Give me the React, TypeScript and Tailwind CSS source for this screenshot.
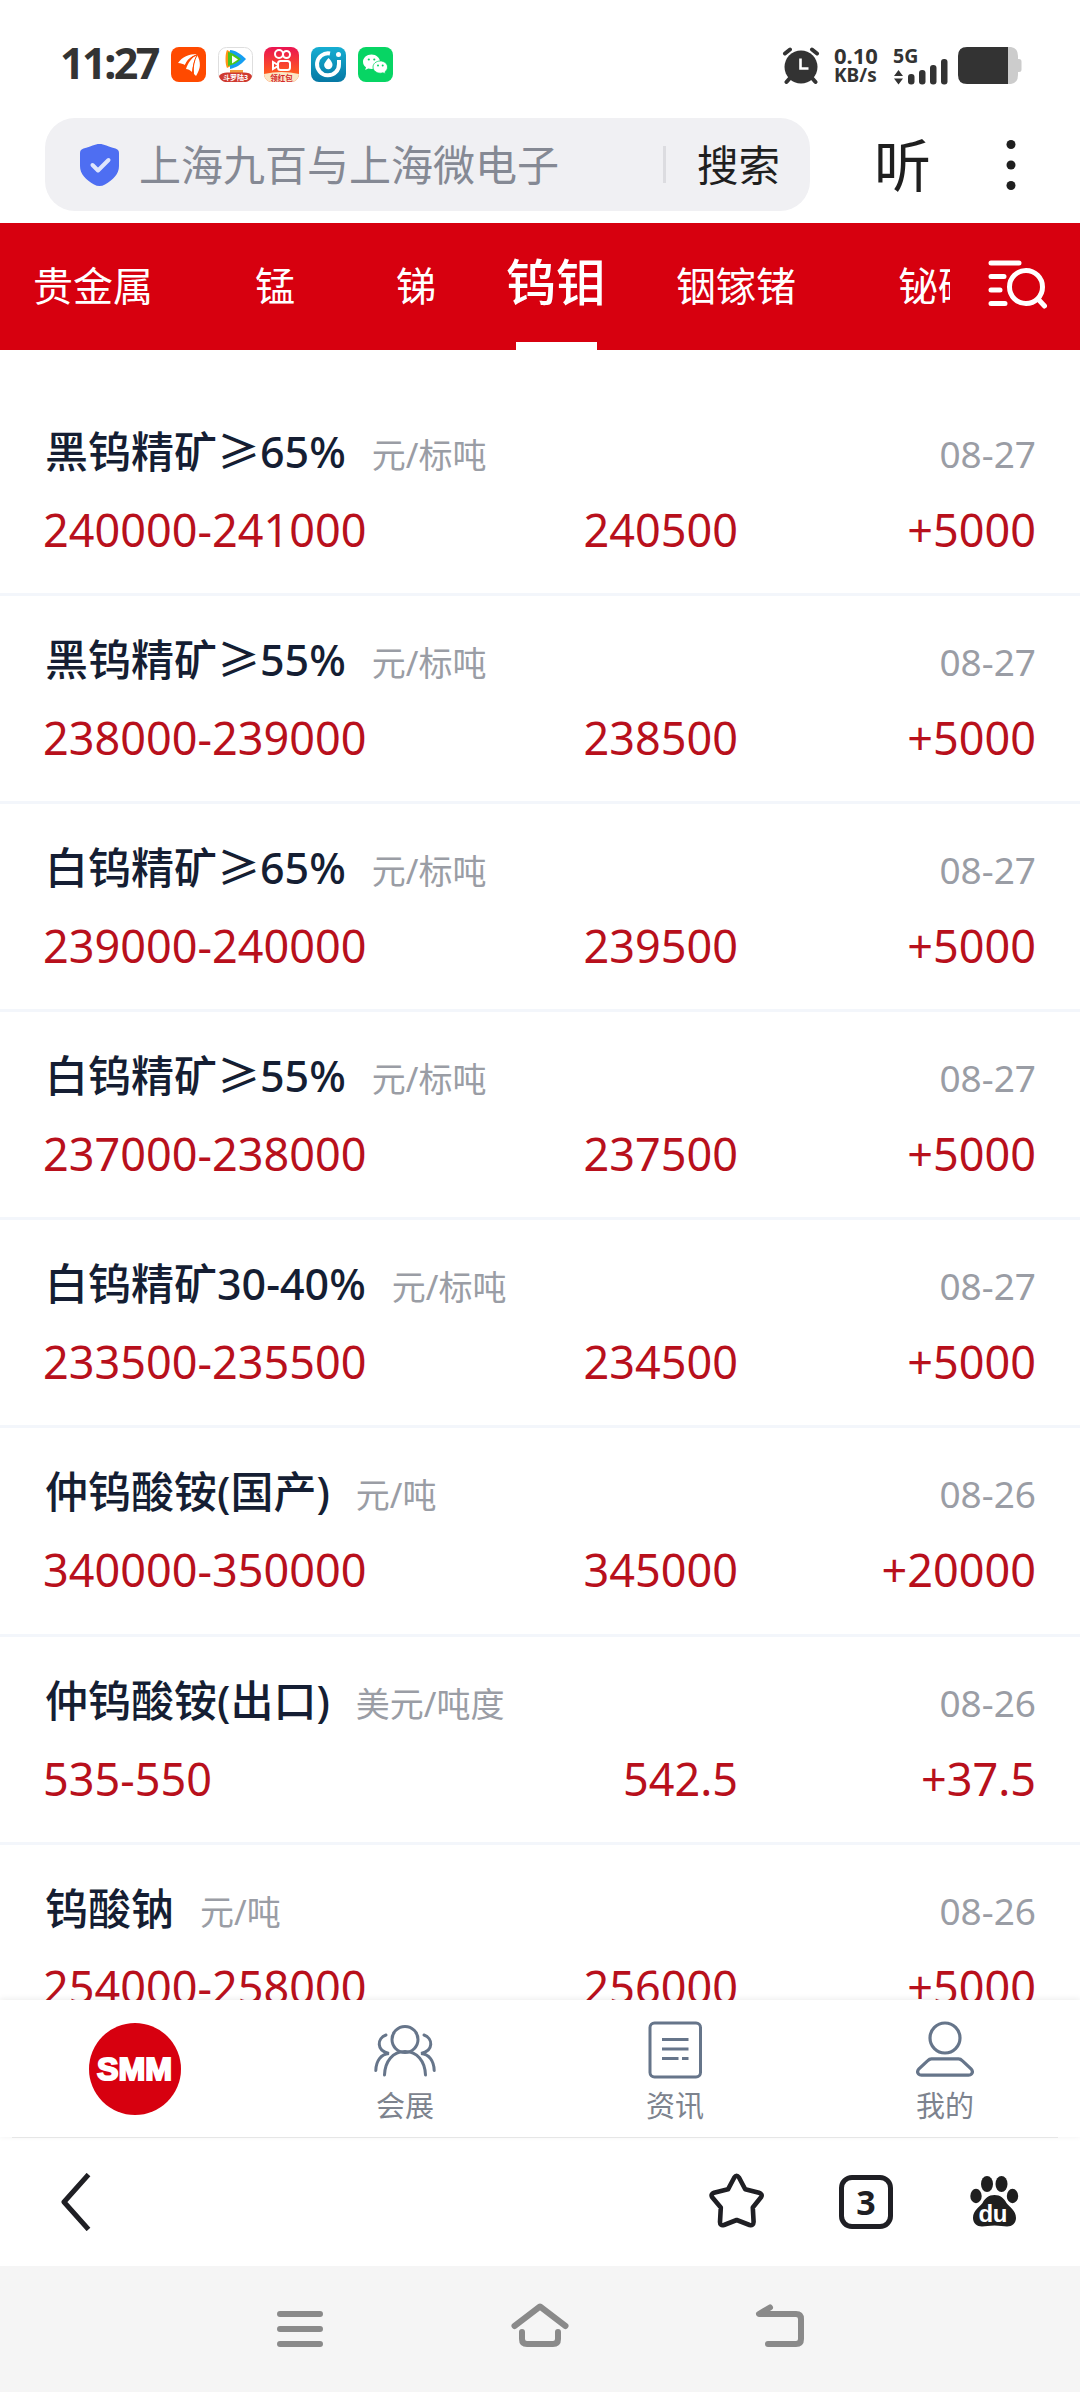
import React from 'react';

interface Quote {
  name: string;
  unit: string;
  date: string;
  range: string;
  average: string;
  change: string;
}

const quotes: Quote[] = [
  { name: '黑钨精矿≥65%', unit: '元/标吨', date: '08-27', range: '240000-241000', average: '240500', change: '+5000' },
  { name: '黑钨精矿≥55%', unit: '元/标吨', date: '08-27', range: '238000-239000', average: '238500', change: '+5000' },
  { name: '白钨精矿≥65%', unit: '元/标吨', date: '08-27', range: '239000-240000', average: '239500', change: '+5000' },
  { name: '白钨精矿≥55%', unit: '元/标吨', date: '08-27', range: '237000-238000', average: '237500', change: '+5000' },
  { name: '白钨精矿30-40%', unit: '元/标吨', date: '08-27', range: '233500-235500', average: '234500', change: '+5000' },
  { name: '仲钨酸铵(国产)', unit: '元/吨', date: '08-26', range: '340000-350000', average: '345000', change: '+20000' },
  { name: '仲钨酸铵(出口)', unit: '美元/吨度', date: '08-26', range: '535-550', average: '542.5', change: '+37.5' },
  { name: '钨酸钠', unit: '元/吨', date: '08-26', range: '254000-258000', average: '256000', change: '+5000' },
];

const AppIcons = () => (
  <div className="ml-[16px] flex gap-[11.7px]">
    <svg width="35" height="35" viewBox="0 0 35 35">
      <rect width="35" height="35" rx="8" fill="#ff4a00" />
      <path d="M7 16c4-6 11-9 19-9-7 3-10 6-12 11-2-1-4-2-7-2z" fill="#fff" />
      <path d="M15 22c2-6 5-11 11-14-3 6-4 10-5 17-2-2-4-3-6-3z" fill="#fff" />
      <path d="M23 27c-1-7 0-13 3-19 4 7 4 13-1 21z" fill="#fff" />
      <path d="M14 19c3-6 6-9 12-11M22 26c0-7 1-12 4-18" stroke="#ff4a00" strokeWidth="1" fill="none" />
    </svg>
    <svg width="35" height="35" viewBox="0 0 35 35">
      <rect x=".5" y=".5" width="34" height="34" rx="8" fill="#fff" stroke="#dedede" />
      <path d="M9 3c-2 4-2 14 0 18l6-3V6z" fill="#ff9414" />
      <path d="M12 3c5 0 11 4 16 9-5 6-11 9-16 10z" fill="#159ef2" />
      <path d="M10 5c5 1 9 4 13 7-4 4-8 6-13 7z" fill="#4bc51d" />
      <path d="M14 8.500l6 4-6 4z" fill="#fff" />
      <rect x="12" y="23" width="13" height="3" fill="#f39a3d" />
      <path d="M1 29c2-3 5-3.500 8-3.500h17c4 0 7 1 8 3.500-1 4-4 6-8 6H9c-4 0-7-2-8-6z" fill="#cf3a30" />
      <text x="17.500" y="33" fontSize="7" fontWeight="700" fill="#fff" textAnchor="middle">斗罗陆3</text>
    </svg>
    <svg width="35" height="35" viewBox="0 0 35 35">
      <defs>
        <linearGradient id="ks" x1="0" y1="0" x2="0" y2="1">
          <stop offset="0" stopColor="#ea1452" />
          <stop offset=".75" stopColor="#ff5a1f" />
        </linearGradient>
        <clipPath id="ksClip">
          <rect width="35" height="35" rx="8" />
        </clipPath>
      </defs>
      <g clipPath="url(#ksClip)">
        <rect width="35" height="35" fill="url(#ks)" />
        <path d="M0 27q17.500-4 35 0v8H0z" fill="#fbe6c4" />
      </g>
      <g fill="none" stroke="#fff" strokeWidth="2">
        <circle cx="15" cy="7" r="4" />
        <circle cx="22.500" cy="7.500" r="3.500" />
        <rect x="14" y="14" width="12" height="9" rx="2.500" />
        <path d="M14 18l-5-3v7l5-3z" />
      </g>
      <text x="17.500" y="33.500" fontSize="7.500" fontWeight="700" fill="#d4272b" textAnchor="middle">领红包</text>
    </svg>
    <svg width="35" height="35" viewBox="0 0 35 35">
      <defs>
        <linearGradient id="di" x1="0" y1="0" x2="0" y2="1">
          <stop offset="0" stopColor="#16aed2" />
          <stop offset="1" stopColor="#0678a4" />
        </linearGradient>
      </defs>
      <rect width="35" height="35" rx="8" fill="url(#di)" />
      <path d="M19 6.500a11 11 0 1 0 9 10.500V13" fill="none" stroke="#fff" strokeWidth="4" />
      <path d="M17.500 11c3 3 4 5 4 7a4.200 4.200 0 0 1-8.400 0c0-2 2-4 4.400-7z" fill="#fff" />
      <circle cx="27.500" cy="7.500" r="2.500" fill="#fff" />
    </svg>
    <svg width="35" height="35" viewBox="0 0 35 35">
      <rect width="35" height="35" rx="8" fill="#07d564" />
      <path d="M13.500 7.500C8.800 7.500 5 10.700 5 14.800c0 2.300 1.200 4.200 3 5.500l-.8 2.700 3-1.500c1 .3 2.200.5 3.300.5 4.700 0 8.500-3.200 8.500-7.200s-3.800-7.300-8.500-7.300z" fill="#fff" />
      <path d="M22.300 14c-4.200 0-7.300 2.700-7.300 6s3.100 6.200 7.300 6.200c.9 0 1.900-.2 2.700-.4l2.600 1.300-.7-2.200c1.600-1.200 2.600-2.900 2.600-4.900 0-3.300-3.200-6-7.200-6z" fill="#fff" stroke="#07d564" strokeWidth=".8" />
      <g fill="#07d564">
        <circle cx="10.800" cy="12.500" r="1.100" />
        <circle cx="16.300" cy="12.500" r="1.100" />
        <circle cx="20" cy="18.500" r="1" />
        <circle cx="24.700" cy="18.500" r="1" />
      </g>
    </svg>
  </div>
);

const StatusBar = () => (
  <header className="flex h-[118px] items-start pl-[60px] pr-[58px] pt-[47px] text-[#333]">
    <span className="-mt-[14px] w-[95px] text-[43px] leading-[60px] font-bold tracking-[-2.500px] whitespace-nowrap">11:27</span>
    <AppIcons />
    <div className="ml-auto flex">
      <svg width="38" height="38" viewBox="0 0 38 38" className="mr-[14px]">
        <g stroke="#333" strokeWidth="4" strokeLinecap="round">
          <path d="M3 6.500l5-4M35 6.500l-5-4M8 31l-3.500 4M30 31l3.500 4" />
        </g>
        <circle cx="19" cy="20" r="16.500" fill="#333" />
        <path d="M18.500 11.500v10h8" fill="none" stroke="#fff" strokeWidth="2.600" />
      </svg>
      <div className="flex w-[44px] flex-col text-[21px] leading-[20px] font-bold whitespace-nowrap">
        <span className="-mt-[2px] text-[22px]">0.10</span>
        <span className="text-[19px]">KB/s</span>
      </div>
      <svg width="56" height="38" viewBox="0 0 56 38" className="ml-[15px]">
        <text x="0" y="15.500" fontSize="19.500" fontWeight="700" fill="#333">5G</text>
        <path d="M5.500 23l4.500 6H1zM5.500 37.500l4.500-6H1z" fill="#333" />
        <g fill="#333">
          <rect x="15" y="27" width="6.500" height="10.500" rx="3" />
          <rect x="26" y="23" width="6.500" height="14.500" rx="3" />
          <rect x="37" y="18" width="6.500" height="19.500" rx="3" />
          <rect x="48" y="12" width="6.500" height="25.500" rx="3" />
        </g>
      </svg>
      <svg width="64" height="37" viewBox="0 0 64 37" className="ml-[9px]">
        <path d="M50 0h3q7 1 7 9v3h1q2.500 0 2.500 2.500v8q0 2.500-2.500 2.500h-1v3q0 8-7 9h-3z" fill="#ccc" />
        <path d="M50 0H9Q0 0 0 9v19q0 9 9 9h41z" fill="#333" />
      </svg>
    </div>
  </header>
);

const SearchBar = () => (
  <div className="flex h-[105px] items-start pl-[45px]">
    <div className="flex h-[93px] w-[765px] items-center rounded-[30px] bg-[#f0f0f3] pl-[35px]">
      <svg width="39" height="42" viewBox="0 0 39 42">
        <path d="M19.500 0c5 0 8 2.500 16 4.500 2 .8 3.500 2 3.500 4.500v13c0 8-6 14-14 18.500q-5.500 3-11 0C6 36 0 30 0 22V9c0-2.500 1.500-3.700 3.500-4.500C11.500 2.500 14.500 0 19.500 0z" fill="#4e6ef2" />
        <path d="M12.500 21l5.500 5.500L28.500 16" fill="none" stroke="#dfe5fc" strokeWidth="4" strokeLinecap="round" strokeLinejoin="round" />
      </svg>
      <span className="ml-[20px] w-[524px] text-[42px] leading-[60px] whitespace-nowrap text-[#858994]">上海九百与上海微电子</span>
      <span className="h-[37px] w-[3px] bg-[#dcdce0]" />
      <span className="ml-[31px] text-[41.500px] leading-[60px] whitespace-nowrap text-[#1f1f1f]">搜索</span>
    </div>
    <span className="mt-[7px] ml-[64px] text-[57px] leading-[80px] text-[#1f1f1f]">听</span>
    <svg width="10" height="50" viewBox="0 0 10 50" className="mt-[22px] ml-[75px]" fill="#1f1f1f">
      <circle cx="5" cy="4.500" r="4.500" />
      <circle cx="5" cy="25" r="4.500" />
      <circle cx="5" cy="45.500" r="4.500" />
    </svg>
  </div>
);

const MetalTabs = () => (
  <nav className="flex h-[127px] bg-[#d7000f] text-white">
    <div className="flex w-[950px] items-baseline overflow-hidden pt-[29px] pl-[33px] text-[40px] leading-[60px] whitespace-nowrap">
      <span>贵金属</span>
      <span className="ml-[102px]">锰</span>
      <span className="ml-[101px]">锑</span>
      <span className="relative ml-[70px] h-[98px] text-[50px] font-medium">
        钨钼
        <i className="absolute bottom-0 left-[10px] h-[8px] w-[81px] bg-white" />
      </span>
      <span className="ml-[70px]">铟镓锗</span>
      <span className="ml-[102px]">铋硒碲</span>
    </div>
    <svg width="60" height="52" viewBox="0 0 60 52" className="mt-[36px] ml-[37px]" fill="none" stroke="#fff" strokeWidth="5" strokeLinecap="round">
      <path d="M4 4h28M4 17.500h13M4 31h9M4 44.500h14" />
      <circle cx="39" cy="28" r="16.500" />
      <path d="M51 40l6.500 7" />
    </svg>
  </nav>
);

const QuoteRow: React.FC<{ quote: Quote }> = ({ quote }) => (
  <li className="h-[208.100px] shrink-0 border-b-[3px] border-[#f3f6fb] pt-[34px] pr-[44px] pl-[43px] leading-[60px] whitespace-nowrap">
    <div className="flex items-baseline">
      <span className="pl-[2px] text-[43px] font-medium text-[#151e33]">{quote.name}</span>
      <span className="ml-[26px] text-[34px] text-[#9a9da5]">{quote.unit}</span>
      <span className="ml-auto text-[37px] text-[#9a9da5]">{quote.date}</span>
    </div>
    <div className="mt-[15px] flex text-[45px] text-[#b8101c]">
      <span className="flex-1">{quote.range}</span>
      <span>{quote.average}</span>
      <span className="w-[298px] text-right">{quote.change}</span>
    </div>
  </li>
);

const BottomTabs = () => (
  <nav className="relative z-10 grid h-[137px] grid-cols-4 bg-white text-[29px] leading-[40px] text-[#7d838e] shadow-[0_-1px_6px_rgba(0,0,0,0.08)]">
    <div className="flex justify-center pt-[23px]">
      <svg width="92" height="92" viewBox="0 0 92 92">
        <circle cx="46" cy="46" r="46" fill="#d7000f" />
        <text x="8" y="57" fontFamily="Liberation Sans" fontSize="31" fontWeight="700" fill="#fff" stroke="#fff" strokeWidth="2" textLength="75" lengthAdjust="spacingAndGlyphs">SMM</text>
      </svg>
    </div>
    <div className="flex flex-col items-center pt-[20px]">
      <svg width="62" height="60" viewBox="0 0 62 60" fill="none" stroke="#66758a" strokeWidth="3" strokeLinecap="round">
        <circle cx="31" cy="19.500" r="13" />
        <path d="M10.500 55C11 41 19 31.500 31 31.500S51 41 51.500 55" />
        <path d="M12 15C3 18 2 31 15 33.500C7 34 2 41 1.800 50.500" />
        <path d="M50 15C59 18 60 31 47 33.500C55 34 60 41 60.200 50.500" />
      </svg>
      <span className="mt-[6px]">会展</span>
    </div>
    <div className="flex flex-col items-center pt-[20px]">
      <svg width="54" height="60" viewBox="0 0 54 60" fill="none" stroke="#66758a" strokeWidth="3">
        <rect x="2" y="3" width="50.500" height="54" rx="4.500" />
        <path d="M14 19.500h26.500M14 29h26.500M14 38.500h16.500M34 38.500h6.500" />
      </svg>
      <span className="mt-[6px]">资讯</span>
    </div>
    <div className="flex flex-col items-center pt-[20px]">
      <svg width="58" height="60" viewBox="0 0 58 60" fill="none" stroke="#66758a" strokeWidth="3.200">
        <ellipse cx="29" cy="18" rx="15" ry="15" />
        <path d="M15.500 38.800h27q2 0 4 2l8.500 8q2.500 3 .5 5.200-1 1.200-3 1.200h-47q-2 0-3-1.200-2-2.200.5-5.200l8.500-8q2-2 4-2z" />
      </svg>
      <span className="mt-[6px]">我的</span>
    </div>
  </nav>
);

const BrowserBar = () => (
  <div className="bg-white">
    <div className="mr-[22px] ml-[12px] h-px bg-[#ececec]" />
    <div className="flex h-[128px] items-start pt-[35px] pl-[60px]">
      <svg width="32" height="58" viewBox="0 0 32 58" fill="none" stroke="#1f1f24" strokeWidth="5">
        <path d="M28.500 1.500L4 29l24.500 27.500" strokeLinejoin="round" />
      </svg>
      <svg width="56" height="56" viewBox="0 0 56 56" className="ml-[617px]" fill="none" stroke="#1f1f24" strokeWidth="4.600" strokeLinejoin="round">
        <path d="M25.300 4.500q2.200-3.500 4.700 0l6.200 11.800 13.800 3.500q3.800 1.200 2.200 4.200L43.800 34.500l.8 14.500q-.2 4-4 3L27.700 47 15 52q-4 1-4-3l.8-14.500L3 24q-1.500-3 2-4.200l14-3.500z" />
      </svg>
      <div className="mt-[2px] ml-[74px] flex h-[54px] w-[54px] items-center justify-center rounded-[13px] border-[5px] border-[#1f1f24] text-[34px] leading-[44px] font-bold text-[#1f1f24]">3</div>
      <svg width="49" height="54" viewBox="0 0 49 54" className="mt-[2px] ml-[77px]" fill="#1f1f1f">
        <ellipse cx="17" cy="9" rx="6" ry="8" />
        <ellipse cx="31.500" cy="9" rx="6" ry="8" />
        <ellipse cx="6" cy="21" rx="5.700" ry="7.200" />
        <ellipse cx="42.500" cy="21" rx="5.700" ry="7.200" />
        <path d="M24.500 20c6 0 9.500 3.500 12 8 3 4.500 9.500 7 9.500 15 0 5-4 8.500-9 8.500-4 0-7-1-12.500-1s-8.500 1-12.500 1c-5 0-9-3.500-9-8.500 0-8 6.500-10.500 9.500-15 2.500-4.500 6-8 12-8z" />
        <text x="8.500" y="46.500" fontFamily="Liberation Sans" fontSize="24" fontWeight="700" fill="#fff" textLength="29">du</text>
      </svg>
    </div>
  </div>
);

const SystemNav = () => (
  <div className="flex h-[126px] items-start bg-[#f5f5f5] pt-[36px] pl-[277px]">
    <svg width="46" height="46" viewBox="0 0 46 46" stroke="#8a8a8a" strokeWidth="6" strokeLinecap="round">
      <path d="M3 12h40M3 27h40M3 42h40" />
    </svg>
    <svg width="58" height="46" viewBox="0 0 58 46" className="ml-[188px]" fill="none" stroke="#8a8a8a" strokeWidth="6" strokeLinecap="round" strokeLinejoin="round">
      <path d="M3.500 24L29 4.500 54.500 24" />
      <path d="M11 30v7q0 5 5 5h26q5 0 5-5v-7" />
    </svg>
    <svg width="50" height="46" viewBox="0 0 50 46" className="ml-[186px]" fill="none" stroke="#8a8a8a" strokeWidth="6" strokeLinecap="round" strokeLinejoin="round">
      <path d="M15 5.500L4 12h37q5 0 5 5v20q0 5-5 5H13" />
    </svg>
  </div>
);

const App: React.FC = () => {
  return (
    <div className="flex h-[2392px] w-[1080px] flex-col overflow-hidden bg-white font-['Noto_Sans','Noto_Sans_CJK_SC',sans-serif]">
      <StatusBar />
      <SearchBar />
      <MetalTabs />
      <ul className="flex h-[1650px] shrink-0 flex-col overflow-hidden pt-[38px]">
        {quotes.map((quote) => (
          <QuoteRow key={quote.name} quote={quote} />
        ))}
      </ul>
      <BottomTabs />
      <BrowserBar />
      <SystemNav />
    </div>
  );
};

export default App;
